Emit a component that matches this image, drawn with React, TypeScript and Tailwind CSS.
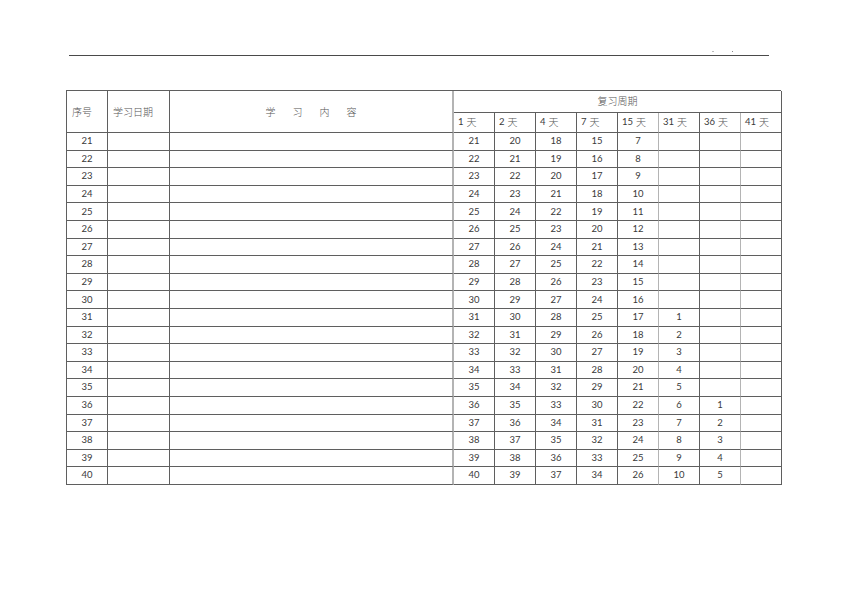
const ROWS: (number | null)[][] = Array.from({ length: 20 }, (_, i) => {
  const n = 21 + i;
  const d15 = n - 14;
  const d31 = n >= 31 ? n - 30 : null;
  const d36 = n >= 36 ? n - 35 : null;
  return [n, n - 1, n - 3, n - 6, d15, d31, d36, null];
});

const DAYS = ["1", "2", "4", "7", "15", "31", "36", "41"];

const cell = "border-r border-b border-[#5f5f5f] flex items-center";
const light = "border-r-[#b4b4b4]";
const cjk = "font-light text-[#555] text-[10px]";

export default function App() {
  return (
    <div
      className="w-[842px] h-[596px] bg-white text-[#3a3a3a] overflow-hidden"
      style={{ fontFamily: 'Lato, "Noto Sans CJK SC", sans-serif' }}
    >
      <div className="pt-[51px] pl-[69px] w-[769px]">
        <div className="flex justify-end gap-[18px] pr-[36px] h-[4px] items-start">
          <span className="block w-[2px] h-[1px] bg-[#bbb]" />
          <span className="block w-[1px] h-[1px] bg-[#888]" />
        </div>
        <div className="h-[1px] w-[700px] bg-[#4a4a4a]" />
      </div>

      <div className="ml-[66px] mt-[34px] w-[715px] border-l border-t border-[#5f5f5f] grid grid-cols-[41px_62px_284px_repeat(8,41px)] grid-rows-[22px_20px_repeat(20,17.6px)] text-[9.5px]">
        <div className={`${cell} ${cjk} row-span-2 pl-[5px] pt-[2px]`}>序号</div>
        <div className={`${cell} ${cjk} row-span-2 pl-[5px] pt-[2px]`}>学习日期</div>
        <div className={`${cell} ${light} ${cjk} border-r-[2px] row-span-2 justify-center pt-[2px]`}>
          <span className="tracking-[17px] pl-[17px]">学习内容</span>
        </div>
        <div className={`${cell} ${cjk} col-span-8 justify-center`}>复习周期</div>
        {DAYS.map((d, i) => (
          <div
            key={d}
            className={`${cell} pl-[4px] gap-[3px] ${i === 4 || i === 6 ? light : ""}`}
          >
            <span>{d}</span>
            <span className="font-light text-[#555] text-[10px]">天</span>
          </div>
        ))}
        {ROWS.map((r) => (
          <div key={r[0]!} className="contents">
            <div className={`${cell} justify-center`}>{r[0]}</div>
            <div className={cell} />
            <div className={`${cell} ${light} border-r-[2px]`} />
            {r.map((v, j) => (
              <div
                key={j}
                className={`${cell} justify-center ${j === 4 || j === 6 ? light : ""}`}
              >
                {v ?? ""}
              </div>
            ))}
          </div>
        ))}
      </div>
    </div>
  );
}
